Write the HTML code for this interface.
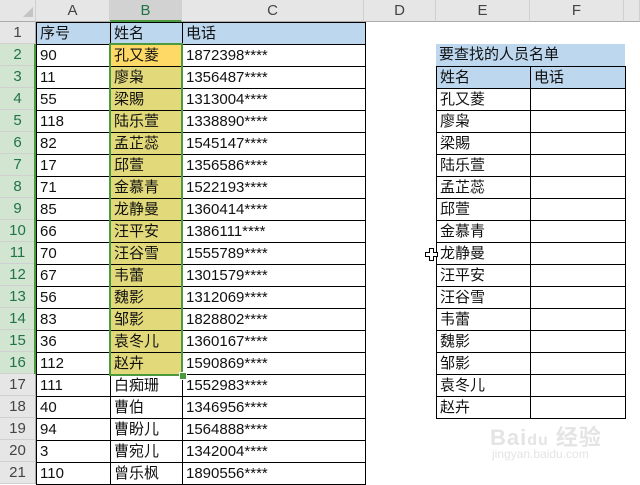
<!DOCTYPE html>
<html><head><meta charset="utf-8"><style>
body{margin:0;width:640px;height:480px;overflow:hidden;background:#fff;position:relative;font-family:"Liberation Sans","Noto Sans CJK SC",sans-serif;}
.ch{position:absolute;top:0;height:22px;line-height:22px;text-align:center;font-size:15px;color:#444;background:#e6e6e6;border-bottom:1px solid #ababab;box-sizing:border-box;border-right:1px solid #d0d0d0}
.rh{position:absolute;left:0;width:36px;height:22px;line-height:22px;text-align:center;font-size:15px;color:#444;background:#e6e6e6;border-right:1px solid #ababab;box-sizing:border-box;border-bottom:1px solid #d0d0d0}
.rh.g{background:#d2e5d0;color:#217346}
table{position:absolute;border-collapse:collapse;table-layout:fixed;font-size:15px}
td{border:1px solid #000;height:21px;padding:0 0 0 3px;white-space:nowrap;overflow:hidden;line-height:21px;color:#111}
.bl{background:#bdd7ee}
.y{background:#e2d97a}
.o{background:#ffd966}
</style></head><body>
<div class="ch" style="left:0;width:36px"></div>
<svg style="position:absolute;left:22px;top:6px" width="12" height="12"><polygon points="11,1 11,11 1,11" fill="#c4c4c4"/></svg>
<div class="ch" style="left:36px;width:74px">A</div>
<div class="ch" style="left:110px;width:72px;background:#d2d2d2;color:#217346;border-bottom:2px solid #4c9a3e">B</div>
<div class="ch" style="left:182px;width:182px">C</div>
<div class="ch" style="left:364px;width:72px">D</div>
<div class="ch" style="left:436px;width:94px">E</div>
<div class="ch" style="left:530px;width:94px">F</div>
<div class="ch" style="left:624px;width:16px"></div>

<div class="rh" style="top:22px">1</div>
<div class="rh g" style="top:44px">2</div>
<div class="rh g" style="top:66px">3</div>
<div class="rh g" style="top:88px">4</div>
<div class="rh g" style="top:110px">5</div>
<div class="rh g" style="top:132px">6</div>
<div class="rh g" style="top:154px">7</div>
<div class="rh g" style="top:176px">8</div>
<div class="rh g" style="top:198px">9</div>
<div class="rh g" style="top:220px">10</div>
<div class="rh g" style="top:242px">11</div>
<div class="rh g" style="top:264px">12</div>
<div class="rh g" style="top:286px">13</div>
<div class="rh g" style="top:308px">14</div>
<div class="rh g" style="top:330px">15</div>
<div class="rh g" style="top:352px">16</div>
<div class="rh" style="top:374px">17</div>
<div class="rh" style="top:396px">18</div>
<div class="rh" style="top:418px">19</div>
<div class="rh" style="top:440px">20</div>
<div class="rh" style="top:462px">21</div>
<div style="position:absolute;left:34px;top:44px;width:2px;height:330px;background:#4c9a3e"></div>

<table style="left:36px;top:22px;width:329px">
<colgroup><col style="width:74px"><col style="width:72px"><col style="width:183px"></colgroup>
<tr class="bl"><td>序号</td><td>姓名</td><td>电话</td></tr>
<tr><td>90</td><td class="o">孔又菱</td><td>1872398****</td></tr>
<tr><td>11</td><td class="y">廖枭</td><td>1356487****</td></tr>
<tr><td>55</td><td class="y">梁賜</td><td>1313004****</td></tr>
<tr><td>118</td><td class="y">陆乐萱</td><td>1338890****</td></tr>
<tr><td>82</td><td class="y">孟芷蕊</td><td>1545147****</td></tr>
<tr><td>17</td><td class="y">邱萱</td><td>1356586****</td></tr>
<tr><td>71</td><td class="y">金慕青</td><td>1522193****</td></tr>
<tr><td>85</td><td class="y">龙静曼</td><td>1360414****</td></tr>
<tr><td>66</td><td class="y">汪平安</td><td>1386111****</td></tr>
<tr><td>70</td><td class="y">汪谷雪</td><td>1555789****</td></tr>
<tr><td>67</td><td class="y">韦蕾</td><td>1301579****</td></tr>
<tr><td>56</td><td class="y">魏影</td><td>1312069****</td></tr>
<tr><td>83</td><td class="y">邹影</td><td>1828802****</td></tr>
<tr><td>36</td><td class="y">袁冬儿</td><td>1360167****</td></tr>
<tr><td>112</td><td class="y">赵卉</td><td>1590869****</td></tr>
<tr><td>111</td><td>白痴珊</td><td>1552983****</td></tr>
<tr><td>40</td><td>曹伯</td><td>1346956****</td></tr>
<tr><td>94</td><td>曹盼儿</td><td>1564888****</td></tr>
<tr><td>3</td><td>曹宛儿</td><td>1342004****</td></tr>
<tr><td>110</td><td>曾乐枫</td><td>1890556****</td></tr>
</table>
<div style="position:absolute;left:109px;top:43px;width:70px;height:329px;border:2px solid #4c9a3e"></div>
<div style="position:absolute;left:179px;top:372px;width:6px;height:6px;background:#4c9a3e;border:1px solid #fff"></div>

<div style="position:absolute;left:436px;top:44px;width:189px;height:22px;line-height:22px;background:#bdd7ee;font-size:15px;padding-left:3px;box-sizing:border-box;color:#111">要查找的人员名单</div>
<table style="left:436px;top:66px;width:189px">
<colgroup><col style="width:94px"><col style="width:95px"></colgroup>
<tr class="bl"><td>姓名</td><td>电话</td></tr>
<tr><td>孔又菱</td><td></td></tr>
<tr><td>廖枭</td><td></td></tr>
<tr><td>梁賜</td><td></td></tr>
<tr><td>陆乐萱</td><td></td></tr>
<tr><td>孟芷蕊</td><td></td></tr>
<tr><td>邱萱</td><td></td></tr>
<tr><td>金慕青</td><td></td></tr>
<tr><td>龙静曼</td><td></td></tr>
<tr><td>汪平安</td><td></td></tr>
<tr><td>汪谷雪</td><td></td></tr>
<tr><td>韦蕾</td><td></td></tr>
<tr><td>魏影</td><td></td></tr>
<tr><td>邹影</td><td></td></tr>
<tr><td>袁冬儿</td><td></td></tr>
<tr><td>赵卉</td><td></td></tr>
</table>
<svg style="position:absolute;left:425px;top:248px" width="14" height="14"><path d="M4.5 0.5h4v4h4v4h-4v4h-4v-4h-4v-4h4z" fill="#fff" stroke="#000"/></svg>
<div style="position:absolute;left:490px;top:420px;font-size:22px;font-weight:bold;color:#e4e4e4;letter-spacing:1px">Bai<span style="font-size:16px">du</span> 经验</div>
<div style="position:absolute;left:492px;top:447px;font-size:12px;color:#e4e4e4">jingyan.baidu.com</div>
</body></html>
